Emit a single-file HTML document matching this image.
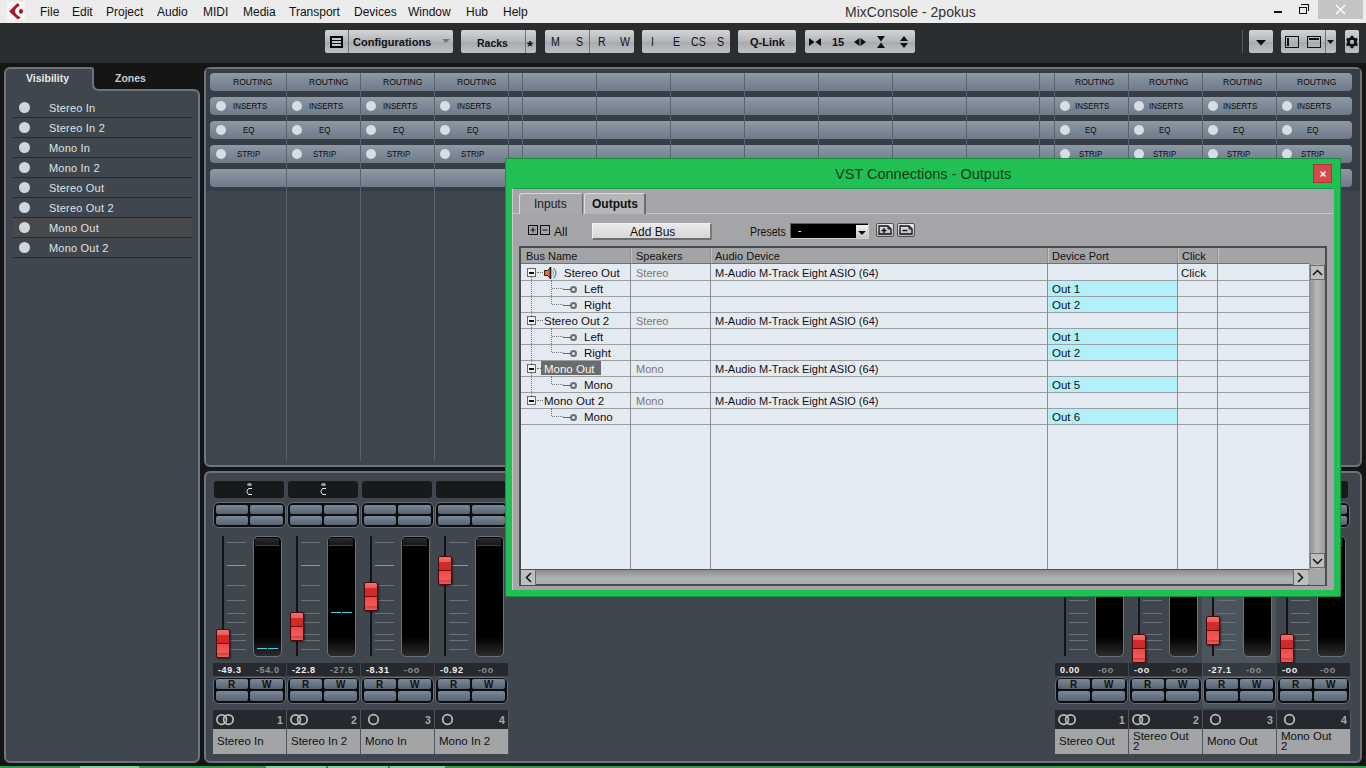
<!DOCTYPE html><html><head><meta charset="utf-8"><style>
*{margin:0;padding:0;box-sizing:border-box}
html,body{width:1366px;height:768px;overflow:hidden;background:#151516;font-family:"Liberation Sans", sans-serif;position:relative}
.a{position:absolute}
.t{position:absolute;white-space:nowrap;line-height:1}
</style></head><body>
<div class="a" style="left:0;top:0;width:1366px;height:23px;background:#ececec"></div>
<svg class="a" style="left:7px;top:2px" width="18" height="18" viewBox="0 0 18 18">
<rect x="0" y="0" width="18" height="18" fill="#f6f6f6"/>
<path d="M10.5 1 L12.9 3.4 Q2.6 9.4 13.8 15.4 L10.8 17.5 L2.1 9.4 Z" fill="#a8182c"/>
<ellipse cx="14" cy="9.4" rx="2" ry="2.4" fill="#a01828"/>
</svg>
<div class="t" style="left:40px;top:6px;font-size:12px;color:#111">File</div>
<div class="t" style="left:72px;top:6px;font-size:12px;color:#111">Edit</div>
<div class="t" style="left:106px;top:6px;font-size:12px;color:#111">Project</div>
<div class="t" style="left:157px;top:6px;font-size:12px;color:#111">Audio</div>
<div class="t" style="left:203px;top:6px;font-size:12px;color:#111">MIDI</div>
<div class="t" style="left:243px;top:6px;font-size:12px;color:#111">Media</div>
<div class="t" style="left:289px;top:6px;font-size:12px;color:#111">Transport</div>
<div class="t" style="left:354px;top:6px;font-size:12px;color:#111">Devices</div>
<div class="t" style="left:408px;top:6px;font-size:12px;color:#111">Window</div>
<div class="t" style="left:466px;top:6px;font-size:12px;color:#111">Hub</div>
<div class="t" style="left:503px;top:6px;font-size:12px;color:#111">Help</div>
<div class="t" style="left:845px;top:5px;font-size:14px;color:#333">MixConsole - 2pokus</div>
<div class="a" style="left:1274px;top:11px;width:8px;height:2px;background:#111"></div>
<div class="a" style="left:1299px;top:7px;width:8px;height:7px;border:1px solid #111"></div>
<div class="a" style="left:1301px;top:4px;width:8px;height:7px;border-top:1px solid #111;border-right:1px solid #111"></div>
<div class="a" style="left:1318px;top:0;width:45px;height:19px;background:#c4c4c4"></div>
<svg class="a" style="left:1335px;top:4px" width="11" height="11"><path d="M1 1L10 10M10 1L1 10" stroke="#fff" stroke-width="1.3"/></svg>
<div class="a" style="left:0;top:23px;width:1366px;height:40px;background:#2b2e31"></div>
<div class="a" style="left:325px;top:30px;width:128px;height:23px;background:linear-gradient(#d2d4d6,#b4b7ba 50%,#a6a9ad 52%,#bfc2c5);border-radius:2px;"></div>
<div class="a" style="left:348px;top:30px;width:1px;height:23px;background:#6e7175"></div>
<svg class="a" style="left:330px;top:36px" width="13" height="12"><rect x="0" y="0" width="13" height="12" fill="#050505"/><rect x="2" y="2" width="9" height="2" fill="#c4c6c8"/><rect x="2" y="5" width="9" height="2" fill="#c4c6c8"/><rect x="2" y="8" width="9" height="2" fill="#c4c6c8"/></svg>
<div class="t" style="left:353px;top:37px;font-size:11px;font-weight:bold;color:#111">Configurations</div>
<svg class="a" style="left:442px;top:39px" width="8" height="5"><path d="M0 0H8L4 4Z" fill="#777"/></svg>
<div class="a" style="left:461px;top:30px;width:75px;height:23px;background:linear-gradient(#d2d4d6,#b4b7ba 50%,#a6a9ad 52%,#bfc2c5);border-radius:2px;"></div>
<div class="a" style="left:525px;top:30px;width:1px;height:23px;background:#6e7175"></div>
<div class="t" style="left:477px;top:38px;font-size:10.5px;font-weight:bold;color:#111">Racks</div>
<div class="t" style="left:527px;top:38px;font-size:15px;font-weight:bold;color:#111">*</div>
<div class="a" style="left:545px;top:30px;width:89px;height:23px;background:linear-gradient(#d2d4d6,#b4b7ba 50%,#a6a9ad 52%,#bfc2c5);border-radius:2px;"></div>
<div class="a" style="left:589px;top:30px;width:1px;height:23px;background:#6e7175"></div>
<div class="t" style="left:550.5px;top:36px;font-size:12.5px;color:#111;transform:scaleX(0.85);transform-origin:0 0">M</div>
<div class="t" style="left:575.5px;top:36px;font-size:12.5px;color:#111;transform:scaleX(0.85);transform-origin:0 0">S</div>
<div class="t" style="left:597.5px;top:36px;font-size:12.5px;color:#111;transform:scaleX(0.85);transform-origin:0 0">R</div>
<div class="t" style="left:619.5px;top:36px;font-size:12.5px;color:#111;transform:scaleX(0.85);transform-origin:0 0">W</div>
<div class="a" style="left:642px;top:30px;width:88px;height:23px;background:linear-gradient(#d2d4d6,#b4b7ba 50%,#a6a9ad 52%,#bfc2c5);border-radius:2px;"></div>
<div class="t" style="left:651px;top:36px;font-size:12.5px;color:#111;transform:scaleX(0.85);transform-origin:0 0">I</div>
<div class="t" style="left:673px;top:36px;font-size:12.5px;color:#111;transform:scaleX(0.85);transform-origin:0 0">E</div>
<div class="t" style="left:690.5px;top:36px;font-size:12.5px;color:#111;transform:scaleX(0.85);transform-origin:0 0">CS</div>
<div class="t" style="left:716.5px;top:36px;font-size:12.5px;color:#111;transform:scaleX(0.85);transform-origin:0 0">S</div>
<div class="a" style="left:738px;top:30px;width:58px;height:23px;background:linear-gradient(#d2d4d6,#b4b7ba 50%,#a6a9ad 52%,#bfc2c5);border-radius:2px;"></div>
<div class="t" style="left:750px;top:37px;font-size:11px;font-weight:bold;color:#111">Q-Link</div>
<div class="a" style="left:805px;top:30px;width:110px;height:23px;background:linear-gradient(#d2d4d6,#b4b7ba 50%,#a6a9ad 52%,#bfc2c5);border-radius:2px;"></div>
<svg class="a" style="left:809px;top:38px" width="12" height="8"><path d="M0 0L5.5 4L0 8ZM12 0L6.5 4L12 8Z" fill="#111"/></svg>
<div class="t" style="left:832px;top:37px;font-size:11px;font-weight:bold;color:#111">15</div>
<svg class="a" style="left:854px;top:38px" width="12" height="8"><path d="M5.5 0L0 4L5.5 8ZM6.5 0L12 4L6.5 8Z" fill="#111"/></svg>
<svg class="a" style="left:877px;top:36px" width="8" height="12"><path d="M0 0H8L4 5.5ZM0 12H8L4 6.5Z" fill="#111"/></svg>
<svg class="a" style="left:900px;top:36px" width="8" height="12"><path d="M4 0L8 5H0ZM4 12L8 7H0Z" fill="#111"/></svg>
<div class="a" style="left:1242px;top:30px;width:1px;height:23px;background:#55585c"></div>
<div class="a" style="left:1249px;top:30px;width:24px;height:23px;background:linear-gradient(#d2d4d6,#b4b7ba 50%,#a6a9ad 52%,#bfc2c5);border-radius:2px;"></div>
<svg class="a" style="left:1256px;top:40px" width="10" height="6"><path d="M0 0H10L5 5.5Z" fill="#111"/></svg>
<div class="a" style="left:1281px;top:30px;width:55px;height:23px;background:linear-gradient(#d2d4d6,#b4b7ba 50%,#a6a9ad 52%,#bfc2c5);border-radius:2px;"></div>
<div class="a" style="left:1325px;top:30px;width:1px;height:23px;background:#6e7175"></div>
<div class="a" style="left:1285px;top:36px;width:14px;height:12px;border:1.5px solid #111"></div><div class="a" style="left:1287px;top:38px;width:2px;height:8px;background:#111"></div>
<div class="a" style="left:1307px;top:36px;width:14px;height:12px;border:1.5px solid #111"></div><div class="a" style="left:1309px;top:38px;width:10px;height:2px;background:#111"></div>
<svg class="a" style="left:1327px;top:40px" width="7" height="4"><path d="M0 0H7L3.5 4Z" fill="#111"/></svg>
<div class="a" style="left:1345px;top:30px;width:14px;height:23px;background:linear-gradient(#d2d4d6,#b4b7ba 50%,#a6a9ad 52%,#bfc2c5);border-radius:2px;"></div>
<svg class="a" style="left:1345px;top:35px" width="14" height="14" viewBox="0 0 14 14"><g transform="translate(7 7)">
<circle r="3.6" fill="none" stroke="#0a0a0a" stroke-width="2.6"/><rect x="-1.3" y="-6.2" width="2.6" height="3" fill="#0a0a0a" transform="rotate(0)"/><rect x="-1.3" y="-6.2" width="2.6" height="3" fill="#0a0a0a" transform="rotate(60)"/><rect x="-1.3" y="-6.2" width="2.6" height="3" fill="#0a0a0a" transform="rotate(120)"/><rect x="-1.3" y="-6.2" width="2.6" height="3" fill="#0a0a0a" transform="rotate(180)"/><rect x="-1.3" y="-6.2" width="2.6" height="3" fill="#0a0a0a" transform="rotate(240)"/><rect x="-1.3" y="-6.2" width="2.6" height="3" fill="#0a0a0a" transform="rotate(300)"/></g></svg>
<div class="a" style="left:4px;top:89px;width:196px;height:674px;background:#3f464e;border:2px solid #6c757e;border-radius:0 6px 6px 6px"></div>
<div class="a" style="left:4px;top:67px;width:90px;height:25px;background:#3f464e;border:2px solid #6c757e;border-bottom:none;border-radius:6px 3px 0 0"></div>
<div class="a" style="left:6px;top:89px;width:86px;height:3px;background:#3f464e"></div>
<svg class="a" style="left:90px;top:80px" width="14" height="14"><rect width="14" height="14" fill="#3f464e"/><path d="M3 0H14V10H8Q3 10 3 5Z" fill="#151516"/><path d="M3 0V4Q3 10 9 10H14" fill="none" stroke="#6c757e" stroke-width="2"/></svg>
<div class="t" style="left:26px;top:73px;font-size:10.5px;font-weight:bold;color:#e8ecef">Visibility</div>
<div class="t" style="left:115px;top:73px;font-size:10.5px;font-weight:bold;color:#c8ccd0">Zones</div>
<div class="a" style="left:19px;top:102px;width:11px;height:11px;border-radius:50%;background:#cfd6de"></div>
<div class="t" style="left:49px;top:103px;font-size:11px;letter-spacing:0.2px;color:#dfe3e7">Stereo In</div>
<div class="a" style="left:13px;top:117px;width:179px;height:1px;background:#252a2f"></div>
<div class="a" style="left:19px;top:122px;width:11px;height:11px;border-radius:50%;background:#cfd6de"></div>
<div class="t" style="left:49px;top:123px;font-size:11px;letter-spacing:0.2px;color:#dfe3e7">Stereo In 2</div>
<div class="a" style="left:13px;top:137px;width:179px;height:1px;background:#252a2f"></div>
<div class="a" style="left:19px;top:142px;width:11px;height:11px;border-radius:50%;background:#cfd6de"></div>
<div class="t" style="left:49px;top:143px;font-size:11px;letter-spacing:0.2px;color:#dfe3e7">Mono In</div>
<div class="a" style="left:13px;top:157px;width:179px;height:1px;background:#252a2f"></div>
<div class="a" style="left:19px;top:162px;width:11px;height:11px;border-radius:50%;background:#cfd6de"></div>
<div class="t" style="left:49px;top:163px;font-size:11px;letter-spacing:0.2px;color:#dfe3e7">Mono In 2</div>
<div class="a" style="left:13px;top:177px;width:179px;height:1px;background:#252a2f"></div>
<div class="a" style="left:19px;top:182px;width:11px;height:11px;border-radius:50%;background:#cfd6de"></div>
<div class="t" style="left:49px;top:183px;font-size:11px;letter-spacing:0.2px;color:#dfe3e7">Stereo Out</div>
<div class="a" style="left:13px;top:197px;width:179px;height:1px;background:#252a2f"></div>
<div class="a" style="left:19px;top:202px;width:11px;height:11px;border-radius:50%;background:#cfd6de"></div>
<div class="t" style="left:49px;top:203px;font-size:11px;letter-spacing:0.2px;color:#dfe3e7">Stereo Out 2</div>
<div class="a" style="left:13px;top:217px;width:179px;height:1px;background:#252a2f"></div>
<div class="a" style="left:13px;top:218px;width:179px;height:19px;background:#48494b"></div>
<div class="a" style="left:19px;top:222px;width:11px;height:11px;border-radius:50%;background:#cfd6de"></div>
<div class="t" style="left:49px;top:223px;font-size:11px;letter-spacing:0.2px;color:#dfe3e7">Mono Out</div>
<div class="a" style="left:13px;top:237px;width:179px;height:1px;background:#252a2f"></div>
<div class="a" style="left:19px;top:242px;width:11px;height:11px;border-radius:50%;background:#cfd6de"></div>
<div class="t" style="left:49px;top:243px;font-size:11px;letter-spacing:0.2px;color:#dfe3e7">Mono Out 2</div>
<div class="a" style="left:13px;top:257px;width:179px;height:1px;background:#252a2f"></div>
<div class="a" style="left:204px;top:67px;width:1158px;height:400px;background:#3e454d;border:2px solid #6c757e;border-radius:6px"></div>
<div class="a" style="left:206px;top:69px;width:1154px;height:122px;background:#363d44"></div>
<div class="a" style="left:210px;top:73px;width:1142px;height:18px;background:linear-gradient(#8d99a5,#7a8693 60%,#6e7a87);border-radius:4px"></div>
<div class="a" style="left:210px;top:97px;width:1142px;height:18px;background:linear-gradient(#8d99a5,#7a8693 60%,#6e7a87);border-radius:4px"></div>
<div class="a" style="left:210px;top:121px;width:1142px;height:18px;background:linear-gradient(#8d99a5,#7a8693 60%,#6e7a87);border-radius:4px"></div>
<div class="a" style="left:210px;top:145px;width:1142px;height:18px;background:linear-gradient(#8d99a5,#7a8693 60%,#6e7a87);border-radius:4px"></div>
<div class="a" style="left:210px;top:169px;width:1142px;height:18px;background:linear-gradient(#8d99a5,#7a8693 60%,#6e7a87);border-radius:4px"></div>
<div class="a" style="left:286px;top:73px;width:1px;height:388px;background:#5a636c"></div>
<div class="a" style="left:360px;top:73px;width:1px;height:388px;background:#5a636c"></div>
<div class="a" style="left:434px;top:73px;width:1px;height:388px;background:#5a636c"></div>
<div class="a" style="left:508px;top:73px;width:1px;height:388px;background:#5a636c"></div>
<div class="a" style="left:522px;top:73px;width:1px;height:388px;background:#5a636c"></div>
<div class="a" style="left:596px;top:73px;width:1px;height:388px;background:#5a636c"></div>
<div class="a" style="left:670px;top:73px;width:1px;height:388px;background:#5a636c"></div>
<div class="a" style="left:744px;top:73px;width:1px;height:388px;background:#5a636c"></div>
<div class="a" style="left:818px;top:73px;width:1px;height:388px;background:#5a636c"></div>
<div class="a" style="left:892px;top:73px;width:1px;height:388px;background:#5a636c"></div>
<div class="a" style="left:966px;top:73px;width:1px;height:388px;background:#5a636c"></div>
<div class="a" style="left:1039px;top:73px;width:1px;height:388px;background:#5a636c"></div>
<div class="a" style="left:1054px;top:73px;width:1px;height:388px;background:#5a636c"></div>
<div class="a" style="left:1128px;top:73px;width:1px;height:388px;background:#5a636c"></div>
<div class="a" style="left:1202px;top:73px;width:1px;height:388px;background:#5a636c"></div>
<div class="a" style="left:1276px;top:73px;width:1px;height:388px;background:#5a636c"></div>
<div class="t" style="left:233px;top:78px;font-size:9px;color:#0a0a0a;transform:scaleX(0.95);transform-origin:0 0">ROUTING</div>
<div class="a" style="left:216px;top:101px;width:10px;height:10px;border-radius:50%;background:#d6dde4"></div>
<div class="t" style="left:233px;top:102px;font-size:9px;color:#0a0a0a;transform:scaleX(0.88);transform-origin:0 0">INSERTS</div>
<div class="a" style="left:216px;top:125px;width:10px;height:10px;border-radius:50%;background:#d6dde4"></div>
<div class="t" style="left:243px;top:126px;font-size:9px;color:#0a0a0a;transform:scaleX(0.88);transform-origin:0 0">EQ</div>
<div class="a" style="left:216px;top:149px;width:10px;height:10px;border-radius:50%;background:#d6dde4"></div>
<div class="t" style="left:237px;top:150px;font-size:9px;color:#0a0a0a;transform:scaleX(0.88);transform-origin:0 0">STRIP</div>
<div class="t" style="left:309px;top:78px;font-size:9px;color:#0a0a0a;transform:scaleX(0.95);transform-origin:0 0">ROUTING</div>
<div class="a" style="left:292px;top:101px;width:10px;height:10px;border-radius:50%;background:#d6dde4"></div>
<div class="t" style="left:309px;top:102px;font-size:9px;color:#0a0a0a;transform:scaleX(0.88);transform-origin:0 0">INSERTS</div>
<div class="a" style="left:292px;top:125px;width:10px;height:10px;border-radius:50%;background:#d6dde4"></div>
<div class="t" style="left:319px;top:126px;font-size:9px;color:#0a0a0a;transform:scaleX(0.88);transform-origin:0 0">EQ</div>
<div class="a" style="left:292px;top:149px;width:10px;height:10px;border-radius:50%;background:#d6dde4"></div>
<div class="t" style="left:313px;top:150px;font-size:9px;color:#0a0a0a;transform:scaleX(0.88);transform-origin:0 0">STRIP</div>
<div class="t" style="left:383px;top:78px;font-size:9px;color:#0a0a0a;transform:scaleX(0.95);transform-origin:0 0">ROUTING</div>
<div class="a" style="left:366px;top:101px;width:10px;height:10px;border-radius:50%;background:#d6dde4"></div>
<div class="t" style="left:383px;top:102px;font-size:9px;color:#0a0a0a;transform:scaleX(0.88);transform-origin:0 0">INSERTS</div>
<div class="a" style="left:366px;top:125px;width:10px;height:10px;border-radius:50%;background:#d6dde4"></div>
<div class="t" style="left:393px;top:126px;font-size:9px;color:#0a0a0a;transform:scaleX(0.88);transform-origin:0 0">EQ</div>
<div class="a" style="left:366px;top:149px;width:10px;height:10px;border-radius:50%;background:#d6dde4"></div>
<div class="t" style="left:387px;top:150px;font-size:9px;color:#0a0a0a;transform:scaleX(0.88);transform-origin:0 0">STRIP</div>
<div class="t" style="left:457px;top:78px;font-size:9px;color:#0a0a0a;transform:scaleX(0.95);transform-origin:0 0">ROUTING</div>
<div class="a" style="left:440px;top:101px;width:10px;height:10px;border-radius:50%;background:#d6dde4"></div>
<div class="t" style="left:457px;top:102px;font-size:9px;color:#0a0a0a;transform:scaleX(0.88);transform-origin:0 0">INSERTS</div>
<div class="a" style="left:440px;top:125px;width:10px;height:10px;border-radius:50%;background:#d6dde4"></div>
<div class="t" style="left:467px;top:126px;font-size:9px;color:#0a0a0a;transform:scaleX(0.88);transform-origin:0 0">EQ</div>
<div class="a" style="left:440px;top:149px;width:10px;height:10px;border-radius:50%;background:#d6dde4"></div>
<div class="t" style="left:461px;top:150px;font-size:9px;color:#0a0a0a;transform:scaleX(0.88);transform-origin:0 0">STRIP</div>
<div class="t" style="left:1075px;top:78px;font-size:9px;color:#0a0a0a;transform:scaleX(0.95);transform-origin:0 0">ROUTING</div>
<div class="a" style="left:1060px;top:101px;width:10px;height:10px;border-radius:50%;background:#d6dde4"></div>
<div class="t" style="left:1075px;top:102px;font-size:9px;color:#0a0a0a;transform:scaleX(0.88);transform-origin:0 0">INSERTS</div>
<div class="a" style="left:1060px;top:125px;width:10px;height:10px;border-radius:50%;background:#d6dde4"></div>
<div class="t" style="left:1085px;top:126px;font-size:9px;color:#0a0a0a;transform:scaleX(0.88);transform-origin:0 0">EQ</div>
<div class="a" style="left:1060px;top:149px;width:10px;height:10px;border-radius:50%;background:#d6dde4"></div>
<div class="t" style="left:1079px;top:150px;font-size:9px;color:#0a0a0a;transform:scaleX(0.88);transform-origin:0 0">STRIP</div>
<div class="t" style="left:1149px;top:78px;font-size:9px;color:#0a0a0a;transform:scaleX(0.95);transform-origin:0 0">ROUTING</div>
<div class="a" style="left:1134px;top:101px;width:10px;height:10px;border-radius:50%;background:#d6dde4"></div>
<div class="t" style="left:1149px;top:102px;font-size:9px;color:#0a0a0a;transform:scaleX(0.88);transform-origin:0 0">INSERTS</div>
<div class="a" style="left:1134px;top:125px;width:10px;height:10px;border-radius:50%;background:#d6dde4"></div>
<div class="t" style="left:1159px;top:126px;font-size:9px;color:#0a0a0a;transform:scaleX(0.88);transform-origin:0 0">EQ</div>
<div class="a" style="left:1134px;top:149px;width:10px;height:10px;border-radius:50%;background:#d6dde4"></div>
<div class="t" style="left:1153px;top:150px;font-size:9px;color:#0a0a0a;transform:scaleX(0.88);transform-origin:0 0">STRIP</div>
<div class="t" style="left:1223px;top:78px;font-size:9px;color:#0a0a0a;transform:scaleX(0.95);transform-origin:0 0">ROUTING</div>
<div class="a" style="left:1208px;top:101px;width:10px;height:10px;border-radius:50%;background:#d6dde4"></div>
<div class="t" style="left:1223px;top:102px;font-size:9px;color:#0a0a0a;transform:scaleX(0.88);transform-origin:0 0">INSERTS</div>
<div class="a" style="left:1208px;top:125px;width:10px;height:10px;border-radius:50%;background:#d6dde4"></div>
<div class="t" style="left:1233px;top:126px;font-size:9px;color:#0a0a0a;transform:scaleX(0.88);transform-origin:0 0">EQ</div>
<div class="a" style="left:1208px;top:149px;width:10px;height:10px;border-radius:50%;background:#d6dde4"></div>
<div class="t" style="left:1227px;top:150px;font-size:9px;color:#0a0a0a;transform:scaleX(0.88);transform-origin:0 0">STRIP</div>
<div class="t" style="left:1297px;top:78px;font-size:9px;color:#0a0a0a;transform:scaleX(0.95);transform-origin:0 0">ROUTING</div>
<div class="a" style="left:1282px;top:101px;width:10px;height:10px;border-radius:50%;background:#d6dde4"></div>
<div class="t" style="left:1297px;top:102px;font-size:9px;color:#0a0a0a;transform:scaleX(0.88);transform-origin:0 0">INSERTS</div>
<div class="a" style="left:1282px;top:125px;width:10px;height:10px;border-radius:50%;background:#d6dde4"></div>
<div class="t" style="left:1307px;top:126px;font-size:9px;color:#0a0a0a;transform:scaleX(0.88);transform-origin:0 0">EQ</div>
<div class="a" style="left:1282px;top:149px;width:10px;height:10px;border-radius:50%;background:#d6dde4"></div>
<div class="t" style="left:1301px;top:150px;font-size:9px;color:#0a0a0a;transform:scaleX(0.88);transform-origin:0 0">STRIP</div>
<div class="a" style="left:204px;top:471px;width:1158px;height:292px;background:#3f464e;border:2px solid #6c757e;border-radius:6px"></div>
<div class="a" style="left:214px;top:481px;width:70px;height:17px;background:#17191b;border-radius:3px"></div>
<div class="a" style="left:247px;top:483px;width:5px;height:3px;border-radius:50%;background:#9aa2a9"></div>
<svg class="a" style="left:246px;top:488px" width="7" height="8"><path d="M6 0.5H2.5L0.8 3.5L2.5 6.5H6" fill="none" stroke="#eee" stroke-width="1"/></svg>
<div class="a" style="left:213px;top:502px;width:73px;height:26px;background:#0b0d0f;border:1px solid #666e76;border-radius:6px"></div>
<div class="a" style="left:216px;top:505px;width:32px;height:9px;background:linear-gradient(#7b8999,#56636f);border-radius:2px"></div>
<div class="a" style="left:216px;top:516px;width:32px;height:9px;background:linear-gradient(#7b8999,#56636f);border-radius:2px"></div>
<div class="a" style="left:250px;top:505px;width:33px;height:9px;background:linear-gradient(#7b8999,#56636f);border-radius:2px"></div>
<div class="a" style="left:250px;top:516px;width:33px;height:9px;background:linear-gradient(#7b8999,#56636f);border-radius:2px"></div>
<div class="a" style="left:222px;top:536px;width:2px;height:120px;background:#121416"></div>
<div class="a" style="left:227px;top:542px;width:19px;height:1px;background:#6a727a"></div>
<div class="a" style="left:227px;top:565px;width:19px;height:1px;background:#8f979f"></div>
<div class="a" style="left:227px;top:585px;width:19px;height:1px;background:#6a727a"></div>
<div class="a" style="left:227px;top:600px;width:19px;height:1px;background:#6a727a"></div>
<div class="a" style="left:227px;top:613px;width:19px;height:1px;background:#6a727a"></div>
<div class="a" style="left:227px;top:622px;width:19px;height:1px;background:#6a727a"></div>
<div class="a" style="left:227px;top:634px;width:19px;height:1px;background:#6a727a"></div>
<div class="a" style="left:227px;top:640px;width:19px;height:1px;background:#6a727a"></div>
<div class="a" style="left:227px;top:649px;width:19px;height:1px;background:#6a727a"></div>
<div class="a" style="left:253px;top:536px;width:29px;height:121px;background:linear-gradient(#000 84%,#2c2c2e);border:1px solid #6a7077;border-radius:5px"></div>
<div class="a" style="left:255px;top:538px;width:24px;height:7px;background:linear-gradient(#2a2c2e,#151617)"></div>
<div class="a" style="left:255px;top:545px;width:24px;height:1px;background:#3f4347"></div>
<div class="a" style="left:257px;top:648px;width:10px;height:1px;background:#4ecde0"></div>
<div class="a" style="left:268px;top:648px;width:10px;height:1px;background:#4ecde0"></div>
<div class="a" style="left:216px;top:629px;width:14px;height:29px;background:linear-gradient(#f07070,#e85c5c 18%,#d42a2a 19%,#d02828 46%,#d02828 48%,#6a1010 48%,#6a1010 52%,#f04848 52%,#f05a5a 84%,#d23c3c 85%,#e86262);border:1px solid #4a0808;border-radius:2px;box-shadow:1px 1px 2px rgba(0,0,0,.5)"></div>
<div class="a" style="left:213px;top:663px;width:73px;height:13px;background:#262a2e"></div>
<div class="t" style="left:218px;top:666px;font-size:9px;font-weight:bold;letter-spacing:0.6px;color:#f0f0f0">-49.3</div>
<div class="t" style="left:256px;top:666px;font-size:9px;font-weight:bold;letter-spacing:0.6px;color:#8a8f94">-54.0</div>
<div class="a" style="left:213px;top:677px;width:73px;height:27px;background:#0b0d0f;border:1px solid #666e76;border-radius:6px"></div>
<div class="a" style="left:216px;top:679px;width:32px;height:10px;background:linear-gradient(#7b8999,#56636f);border-radius:2px"></div>
<div class="a" style="left:216px;top:691px;width:32px;height:10px;background:linear-gradient(#7b8999,#56636f);border-radius:2px"></div>
<div class="a" style="left:250px;top:679px;width:33px;height:10px;background:linear-gradient(#7b8999,#56636f);border-radius:2px"></div>
<div class="a" style="left:250px;top:691px;width:33px;height:10px;background:linear-gradient(#7b8999,#56636f);border-radius:2px"></div>
<div class="t" style="left:228px;top:680px;font-size:10px;font-weight:bold;color:#111">R</div>
<div class="t" style="left:262px;top:680px;font-size:10px;font-weight:bold;color:#111">W</div>
<div class="a" style="left:213px;top:710px;width:73px;height:19px;background:#25292d"></div>
<div class="a" style="left:213px;top:729px;width:73px;height:25px;background:#a2a4a6"></div>
<div class="a" style="left:286px;top:710px;width:1px;height:44px;background:#50565c"></div>
<svg class="a" style="left:215px;top:713px" width="20" height="13"><circle cx="6.7" cy="6.6" r="4.8" fill="none" stroke="#bdbdbd" stroke-width="1.7"/><circle cx="13.4" cy="6.6" r="4.8" fill="none" stroke="#bdbdbd" stroke-width="1.7"/></svg>
<div class="t" style="left:277px;top:715px;font-size:10.5px;font-weight:bold;color:#aaa">1</div>
<div class="t" style="left:217px;top:736px;font-size:11.5px;color:#111">Stereo In</div>
<div class="a" style="left:288px;top:481px;width:70px;height:17px;background:#17191b;border-radius:3px"></div>
<div class="a" style="left:321px;top:483px;width:5px;height:3px;border-radius:50%;background:#9aa2a9"></div>
<svg class="a" style="left:320px;top:488px" width="7" height="8"><path d="M6 0.5H2.5L0.8 3.5L2.5 6.5H6" fill="none" stroke="#eee" stroke-width="1"/></svg>
<div class="a" style="left:287px;top:502px;width:73px;height:26px;background:#0b0d0f;border:1px solid #666e76;border-radius:6px"></div>
<div class="a" style="left:290px;top:505px;width:32px;height:9px;background:linear-gradient(#7b8999,#56636f);border-radius:2px"></div>
<div class="a" style="left:290px;top:516px;width:32px;height:9px;background:linear-gradient(#7b8999,#56636f);border-radius:2px"></div>
<div class="a" style="left:324px;top:505px;width:33px;height:9px;background:linear-gradient(#7b8999,#56636f);border-radius:2px"></div>
<div class="a" style="left:324px;top:516px;width:33px;height:9px;background:linear-gradient(#7b8999,#56636f);border-radius:2px"></div>
<div class="a" style="left:296px;top:536px;width:2px;height:120px;background:#121416"></div>
<div class="a" style="left:301px;top:542px;width:19px;height:1px;background:#6a727a"></div>
<div class="a" style="left:301px;top:565px;width:19px;height:1px;background:#8f979f"></div>
<div class="a" style="left:301px;top:585px;width:19px;height:1px;background:#6a727a"></div>
<div class="a" style="left:301px;top:600px;width:19px;height:1px;background:#6a727a"></div>
<div class="a" style="left:301px;top:613px;width:19px;height:1px;background:#6a727a"></div>
<div class="a" style="left:301px;top:622px;width:19px;height:1px;background:#6a727a"></div>
<div class="a" style="left:301px;top:634px;width:19px;height:1px;background:#6a727a"></div>
<div class="a" style="left:301px;top:640px;width:19px;height:1px;background:#6a727a"></div>
<div class="a" style="left:301px;top:649px;width:19px;height:1px;background:#6a727a"></div>
<div class="a" style="left:327px;top:536px;width:29px;height:121px;background:linear-gradient(#000 84%,#2c2c2e);border:1px solid #6a7077;border-radius:5px"></div>
<div class="a" style="left:329px;top:538px;width:24px;height:7px;background:linear-gradient(#2a2c2e,#151617)"></div>
<div class="a" style="left:329px;top:545px;width:24px;height:1px;background:#3f4347"></div>
<div class="a" style="left:331px;top:612px;width:10px;height:1px;background:#4ecde0"></div>
<div class="a" style="left:342px;top:612px;width:10px;height:1px;background:#4ecde0"></div>
<div class="a" style="left:290px;top:612px;width:14px;height:29px;background:linear-gradient(#f07070,#e85c5c 18%,#d42a2a 19%,#d02828 46%,#d02828 48%,#6a1010 48%,#6a1010 52%,#f04848 52%,#f05a5a 84%,#d23c3c 85%,#e86262);border:1px solid #4a0808;border-radius:2px;box-shadow:1px 1px 2px rgba(0,0,0,.5)"></div>
<div class="a" style="left:287px;top:663px;width:73px;height:13px;background:#262a2e"></div>
<div class="t" style="left:292px;top:666px;font-size:9px;font-weight:bold;letter-spacing:0.6px;color:#f0f0f0">-22.8</div>
<div class="t" style="left:330px;top:666px;font-size:9px;font-weight:bold;letter-spacing:0.6px;color:#8a8f94">-27.5</div>
<div class="a" style="left:287px;top:677px;width:73px;height:27px;background:#0b0d0f;border:1px solid #666e76;border-radius:6px"></div>
<div class="a" style="left:290px;top:679px;width:32px;height:10px;background:linear-gradient(#7b8999,#56636f);border-radius:2px"></div>
<div class="a" style="left:290px;top:691px;width:32px;height:10px;background:linear-gradient(#7b8999,#56636f);border-radius:2px"></div>
<div class="a" style="left:324px;top:679px;width:33px;height:10px;background:linear-gradient(#7b8999,#56636f);border-radius:2px"></div>
<div class="a" style="left:324px;top:691px;width:33px;height:10px;background:linear-gradient(#7b8999,#56636f);border-radius:2px"></div>
<div class="t" style="left:302px;top:680px;font-size:10px;font-weight:bold;color:#111">R</div>
<div class="t" style="left:336px;top:680px;font-size:10px;font-weight:bold;color:#111">W</div>
<div class="a" style="left:287px;top:710px;width:73px;height:19px;background:#25292d"></div>
<div class="a" style="left:287px;top:729px;width:73px;height:25px;background:#a2a4a6"></div>
<div class="a" style="left:360px;top:710px;width:1px;height:44px;background:#50565c"></div>
<svg class="a" style="left:289px;top:713px" width="20" height="13"><circle cx="6.7" cy="6.6" r="4.8" fill="none" stroke="#bdbdbd" stroke-width="1.7"/><circle cx="13.4" cy="6.6" r="4.8" fill="none" stroke="#bdbdbd" stroke-width="1.7"/></svg>
<div class="t" style="left:351px;top:715px;font-size:10.5px;font-weight:bold;color:#aaa">2</div>
<div class="t" style="left:291px;top:736px;font-size:11.5px;color:#111">Stereo In 2</div>
<div class="a" style="left:362px;top:481px;width:70px;height:17px;background:#17191b;border-radius:3px"></div>
<div class="a" style="left:361px;top:502px;width:73px;height:26px;background:#0b0d0f;border:1px solid #666e76;border-radius:6px"></div>
<div class="a" style="left:364px;top:505px;width:32px;height:9px;background:linear-gradient(#7b8999,#56636f);border-radius:2px"></div>
<div class="a" style="left:364px;top:516px;width:32px;height:9px;background:linear-gradient(#7b8999,#56636f);border-radius:2px"></div>
<div class="a" style="left:398px;top:505px;width:33px;height:9px;background:linear-gradient(#7b8999,#56636f);border-radius:2px"></div>
<div class="a" style="left:398px;top:516px;width:33px;height:9px;background:linear-gradient(#7b8999,#56636f);border-radius:2px"></div>
<div class="a" style="left:370px;top:536px;width:2px;height:120px;background:#121416"></div>
<div class="a" style="left:375px;top:542px;width:19px;height:1px;background:#6a727a"></div>
<div class="a" style="left:375px;top:565px;width:19px;height:1px;background:#8f979f"></div>
<div class="a" style="left:375px;top:585px;width:19px;height:1px;background:#6a727a"></div>
<div class="a" style="left:375px;top:600px;width:19px;height:1px;background:#6a727a"></div>
<div class="a" style="left:375px;top:613px;width:19px;height:1px;background:#6a727a"></div>
<div class="a" style="left:375px;top:622px;width:19px;height:1px;background:#6a727a"></div>
<div class="a" style="left:375px;top:634px;width:19px;height:1px;background:#6a727a"></div>
<div class="a" style="left:375px;top:640px;width:19px;height:1px;background:#6a727a"></div>
<div class="a" style="left:375px;top:649px;width:19px;height:1px;background:#6a727a"></div>
<div class="a" style="left:401px;top:536px;width:29px;height:121px;background:linear-gradient(#000 84%,#2c2c2e);border:1px solid #6a7077;border-radius:5px"></div>
<div class="a" style="left:403px;top:538px;width:24px;height:7px;background:linear-gradient(#2a2c2e,#151617)"></div>
<div class="a" style="left:403px;top:545px;width:24px;height:1px;background:#3f4347"></div>
<div class="a" style="left:364px;top:582px;width:14px;height:29px;background:linear-gradient(#f07070,#e85c5c 18%,#d42a2a 19%,#d02828 46%,#d02828 48%,#6a1010 48%,#6a1010 52%,#f04848 52%,#f05a5a 84%,#d23c3c 85%,#e86262);border:1px solid #4a0808;border-radius:2px;box-shadow:1px 1px 2px rgba(0,0,0,.5)"></div>
<div class="a" style="left:361px;top:663px;width:73px;height:13px;background:#262a2e"></div>
<div class="t" style="left:366px;top:666px;font-size:9px;font-weight:bold;letter-spacing:0.6px;color:#f0f0f0">-8.31</div>
<div class="t" style="left:404px;top:666px;font-size:9px;font-weight:bold;letter-spacing:0.6px;color:#8a8f94">-oo</div>
<div class="a" style="left:361px;top:677px;width:73px;height:27px;background:#0b0d0f;border:1px solid #666e76;border-radius:6px"></div>
<div class="a" style="left:364px;top:679px;width:32px;height:10px;background:linear-gradient(#7b8999,#56636f);border-radius:2px"></div>
<div class="a" style="left:364px;top:691px;width:32px;height:10px;background:linear-gradient(#7b8999,#56636f);border-radius:2px"></div>
<div class="a" style="left:398px;top:679px;width:33px;height:10px;background:linear-gradient(#7b8999,#56636f);border-radius:2px"></div>
<div class="a" style="left:398px;top:691px;width:33px;height:10px;background:linear-gradient(#7b8999,#56636f);border-radius:2px"></div>
<div class="t" style="left:376px;top:680px;font-size:10px;font-weight:bold;color:#111">R</div>
<div class="t" style="left:410px;top:680px;font-size:10px;font-weight:bold;color:#111">W</div>
<div class="a" style="left:361px;top:710px;width:73px;height:19px;background:#25292d"></div>
<div class="a" style="left:361px;top:729px;width:73px;height:25px;background:#a2a4a6"></div>
<div class="a" style="left:434px;top:710px;width:1px;height:44px;background:#50565c"></div>
<svg class="a" style="left:367px;top:713px" width="14" height="13"><circle cx="6.5" cy="6.5" r="4.8" fill="none" stroke="#bdbdbd" stroke-width="1.7"/></svg>
<div class="t" style="left:425px;top:715px;font-size:10.5px;font-weight:bold;color:#aaa">3</div>
<div class="t" style="left:365px;top:736px;font-size:11.5px;color:#111">Mono In</div>
<div class="a" style="left:436px;top:481px;width:70px;height:17px;background:#17191b;border-radius:3px"></div>
<div class="a" style="left:435px;top:502px;width:73px;height:26px;background:#0b0d0f;border:1px solid #666e76;border-radius:6px"></div>
<div class="a" style="left:438px;top:505px;width:32px;height:9px;background:linear-gradient(#7b8999,#56636f);border-radius:2px"></div>
<div class="a" style="left:438px;top:516px;width:32px;height:9px;background:linear-gradient(#7b8999,#56636f);border-radius:2px"></div>
<div class="a" style="left:472px;top:505px;width:33px;height:9px;background:linear-gradient(#7b8999,#56636f);border-radius:2px"></div>
<div class="a" style="left:472px;top:516px;width:33px;height:9px;background:linear-gradient(#7b8999,#56636f);border-radius:2px"></div>
<div class="a" style="left:444px;top:536px;width:2px;height:120px;background:#121416"></div>
<div class="a" style="left:449px;top:542px;width:19px;height:1px;background:#6a727a"></div>
<div class="a" style="left:449px;top:565px;width:19px;height:1px;background:#8f979f"></div>
<div class="a" style="left:449px;top:585px;width:19px;height:1px;background:#6a727a"></div>
<div class="a" style="left:449px;top:600px;width:19px;height:1px;background:#6a727a"></div>
<div class="a" style="left:449px;top:613px;width:19px;height:1px;background:#6a727a"></div>
<div class="a" style="left:449px;top:622px;width:19px;height:1px;background:#6a727a"></div>
<div class="a" style="left:449px;top:634px;width:19px;height:1px;background:#6a727a"></div>
<div class="a" style="left:449px;top:640px;width:19px;height:1px;background:#6a727a"></div>
<div class="a" style="left:449px;top:649px;width:19px;height:1px;background:#6a727a"></div>
<div class="a" style="left:475px;top:536px;width:29px;height:121px;background:linear-gradient(#000 84%,#2c2c2e);border:1px solid #6a7077;border-radius:5px"></div>
<div class="a" style="left:477px;top:538px;width:24px;height:7px;background:linear-gradient(#2a2c2e,#151617)"></div>
<div class="a" style="left:477px;top:545px;width:24px;height:1px;background:#3f4347"></div>
<div class="a" style="left:438px;top:556px;width:14px;height:29px;background:linear-gradient(#f07070,#e85c5c 18%,#d42a2a 19%,#d02828 46%,#d02828 48%,#6a1010 48%,#6a1010 52%,#f04848 52%,#f05a5a 84%,#d23c3c 85%,#e86262);border:1px solid #4a0808;border-radius:2px;box-shadow:1px 1px 2px rgba(0,0,0,.5)"></div>
<div class="a" style="left:435px;top:663px;width:73px;height:13px;background:#262a2e"></div>
<div class="t" style="left:440px;top:666px;font-size:9px;font-weight:bold;letter-spacing:0.6px;color:#f0f0f0">-0.92</div>
<div class="t" style="left:478px;top:666px;font-size:9px;font-weight:bold;letter-spacing:0.6px;color:#8a8f94">-oo</div>
<div class="a" style="left:435px;top:677px;width:73px;height:27px;background:#0b0d0f;border:1px solid #666e76;border-radius:6px"></div>
<div class="a" style="left:438px;top:679px;width:32px;height:10px;background:linear-gradient(#7b8999,#56636f);border-radius:2px"></div>
<div class="a" style="left:438px;top:691px;width:32px;height:10px;background:linear-gradient(#7b8999,#56636f);border-radius:2px"></div>
<div class="a" style="left:472px;top:679px;width:33px;height:10px;background:linear-gradient(#7b8999,#56636f);border-radius:2px"></div>
<div class="a" style="left:472px;top:691px;width:33px;height:10px;background:linear-gradient(#7b8999,#56636f);border-radius:2px"></div>
<div class="t" style="left:450px;top:680px;font-size:10px;font-weight:bold;color:#111">R</div>
<div class="t" style="left:484px;top:680px;font-size:10px;font-weight:bold;color:#111">W</div>
<div class="a" style="left:435px;top:710px;width:73px;height:19px;background:#25292d"></div>
<div class="a" style="left:435px;top:729px;width:73px;height:25px;background:#a2a4a6"></div>
<div class="a" style="left:508px;top:710px;width:1px;height:44px;background:#50565c"></div>
<svg class="a" style="left:441px;top:713px" width="14" height="13"><circle cx="6.5" cy="6.5" r="4.8" fill="none" stroke="#bdbdbd" stroke-width="1.7"/></svg>
<div class="t" style="left:499px;top:715px;font-size:10.5px;font-weight:bold;color:#aaa">4</div>
<div class="t" style="left:439px;top:736px;font-size:11.5px;color:#111">Mono In 2</div>
<div class="a" style="left:1056px;top:481px;width:70px;height:17px;background:#17191b;border-radius:3px"></div>
<div class="a" style="left:1055px;top:502px;width:73px;height:26px;background:#0b0d0f;border:1px solid #666e76;border-radius:6px"></div>
<div class="a" style="left:1058px;top:505px;width:32px;height:9px;background:linear-gradient(#7b8999,#56636f);border-radius:2px"></div>
<div class="a" style="left:1058px;top:516px;width:32px;height:9px;background:linear-gradient(#7b8999,#56636f);border-radius:2px"></div>
<div class="a" style="left:1092px;top:505px;width:33px;height:9px;background:linear-gradient(#7b8999,#56636f);border-radius:2px"></div>
<div class="a" style="left:1092px;top:516px;width:33px;height:9px;background:linear-gradient(#7b8999,#56636f);border-radius:2px"></div>
<div class="a" style="left:1064px;top:536px;width:2px;height:120px;background:#121416"></div>
<div class="a" style="left:1069px;top:542px;width:19px;height:1px;background:#6a727a"></div>
<div class="a" style="left:1069px;top:565px;width:19px;height:1px;background:#8f979f"></div>
<div class="a" style="left:1069px;top:585px;width:19px;height:1px;background:#6a727a"></div>
<div class="a" style="left:1069px;top:600px;width:19px;height:1px;background:#6a727a"></div>
<div class="a" style="left:1069px;top:613px;width:19px;height:1px;background:#6a727a"></div>
<div class="a" style="left:1069px;top:622px;width:19px;height:1px;background:#6a727a"></div>
<div class="a" style="left:1069px;top:634px;width:19px;height:1px;background:#6a727a"></div>
<div class="a" style="left:1069px;top:640px;width:19px;height:1px;background:#6a727a"></div>
<div class="a" style="left:1069px;top:649px;width:19px;height:1px;background:#6a727a"></div>
<div class="a" style="left:1095px;top:536px;width:29px;height:121px;background:linear-gradient(#000 84%,#2c2c2e);border:1px solid #6a7077;border-radius:5px"></div>
<div class="a" style="left:1097px;top:538px;width:24px;height:7px;background:linear-gradient(#2a2c2e,#151617)"></div>
<div class="a" style="left:1097px;top:545px;width:24px;height:1px;background:#3f4347"></div>
<div class="a" style="left:1055px;top:663px;width:73px;height:13px;background:#262a2e"></div>
<div class="t" style="left:1060px;top:666px;font-size:9px;font-weight:bold;letter-spacing:0.6px;color:#f0f0f0">0.00</div>
<div class="t" style="left:1098px;top:666px;font-size:9px;font-weight:bold;letter-spacing:0.6px;color:#8a8f94">-oo</div>
<div class="a" style="left:1055px;top:677px;width:73px;height:27px;background:#0b0d0f;border:1px solid #666e76;border-radius:6px"></div>
<div class="a" style="left:1058px;top:679px;width:32px;height:10px;background:linear-gradient(#7b8999,#56636f);border-radius:2px"></div>
<div class="a" style="left:1058px;top:691px;width:32px;height:10px;background:linear-gradient(#7b8999,#56636f);border-radius:2px"></div>
<div class="a" style="left:1092px;top:679px;width:33px;height:10px;background:linear-gradient(#7b8999,#56636f);border-radius:2px"></div>
<div class="a" style="left:1092px;top:691px;width:33px;height:10px;background:linear-gradient(#7b8999,#56636f);border-radius:2px"></div>
<div class="t" style="left:1070px;top:680px;font-size:10px;font-weight:bold;color:#111">R</div>
<div class="t" style="left:1104px;top:680px;font-size:10px;font-weight:bold;color:#111">W</div>
<div class="a" style="left:1055px;top:710px;width:73px;height:19px;background:#25292d"></div>
<div class="a" style="left:1055px;top:729px;width:73px;height:25px;background:#a2a4a6"></div>
<div class="a" style="left:1128px;top:710px;width:1px;height:44px;background:#50565c"></div>
<svg class="a" style="left:1057px;top:713px" width="20" height="13"><circle cx="6.7" cy="6.6" r="4.8" fill="none" stroke="#bdbdbd" stroke-width="1.7"/><circle cx="13.4" cy="6.6" r="4.8" fill="none" stroke="#bdbdbd" stroke-width="1.7"/></svg>
<div class="t" style="left:1119px;top:715px;font-size:10.5px;font-weight:bold;color:#aaa">1</div>
<div class="t" style="left:1059px;top:736px;font-size:11.5px;color:#111">Stereo Out</div>
<div class="a" style="left:1130px;top:481px;width:70px;height:17px;background:#17191b;border-radius:3px"></div>
<div class="a" style="left:1129px;top:502px;width:73px;height:26px;background:#0b0d0f;border:1px solid #666e76;border-radius:6px"></div>
<div class="a" style="left:1132px;top:505px;width:32px;height:9px;background:linear-gradient(#7b8999,#56636f);border-radius:2px"></div>
<div class="a" style="left:1132px;top:516px;width:32px;height:9px;background:linear-gradient(#7b8999,#56636f);border-radius:2px"></div>
<div class="a" style="left:1166px;top:505px;width:33px;height:9px;background:linear-gradient(#7b8999,#56636f);border-radius:2px"></div>
<div class="a" style="left:1166px;top:516px;width:33px;height:9px;background:linear-gradient(#7b8999,#56636f);border-radius:2px"></div>
<div class="a" style="left:1138px;top:536px;width:2px;height:120px;background:#121416"></div>
<div class="a" style="left:1143px;top:542px;width:19px;height:1px;background:#6a727a"></div>
<div class="a" style="left:1143px;top:565px;width:19px;height:1px;background:#8f979f"></div>
<div class="a" style="left:1143px;top:585px;width:19px;height:1px;background:#6a727a"></div>
<div class="a" style="left:1143px;top:600px;width:19px;height:1px;background:#6a727a"></div>
<div class="a" style="left:1143px;top:613px;width:19px;height:1px;background:#6a727a"></div>
<div class="a" style="left:1143px;top:622px;width:19px;height:1px;background:#6a727a"></div>
<div class="a" style="left:1143px;top:634px;width:19px;height:1px;background:#6a727a"></div>
<div class="a" style="left:1143px;top:640px;width:19px;height:1px;background:#6a727a"></div>
<div class="a" style="left:1143px;top:649px;width:19px;height:1px;background:#6a727a"></div>
<div class="a" style="left:1169px;top:536px;width:29px;height:121px;background:linear-gradient(#000 84%,#2c2c2e);border:1px solid #6a7077;border-radius:5px"></div>
<div class="a" style="left:1171px;top:538px;width:24px;height:7px;background:linear-gradient(#2a2c2e,#151617)"></div>
<div class="a" style="left:1171px;top:545px;width:24px;height:1px;background:#3f4347"></div>
<div class="a" style="left:1132px;top:634px;width:14px;height:29px;background:linear-gradient(#f07070,#e85c5c 18%,#d42a2a 19%,#d02828 46%,#d02828 48%,#6a1010 48%,#6a1010 52%,#f04848 52%,#f05a5a 84%,#d23c3c 85%,#e86262);border:1px solid #4a0808;border-radius:2px;box-shadow:1px 1px 2px rgba(0,0,0,.5)"></div>
<div class="a" style="left:1129px;top:663px;width:73px;height:13px;background:#262a2e"></div>
<div class="t" style="left:1134px;top:666px;font-size:9px;font-weight:bold;letter-spacing:0.6px;color:#f0f0f0">-oo</div>
<div class="t" style="left:1172px;top:666px;font-size:9px;font-weight:bold;letter-spacing:0.6px;color:#8a8f94">-oo</div>
<div class="a" style="left:1129px;top:677px;width:73px;height:27px;background:#0b0d0f;border:1px solid #666e76;border-radius:6px"></div>
<div class="a" style="left:1132px;top:679px;width:32px;height:10px;background:linear-gradient(#7b8999,#56636f);border-radius:2px"></div>
<div class="a" style="left:1132px;top:691px;width:32px;height:10px;background:linear-gradient(#7b8999,#56636f);border-radius:2px"></div>
<div class="a" style="left:1166px;top:679px;width:33px;height:10px;background:linear-gradient(#7b8999,#56636f);border-radius:2px"></div>
<div class="a" style="left:1166px;top:691px;width:33px;height:10px;background:linear-gradient(#7b8999,#56636f);border-radius:2px"></div>
<div class="t" style="left:1144px;top:680px;font-size:10px;font-weight:bold;color:#111">R</div>
<div class="t" style="left:1178px;top:680px;font-size:10px;font-weight:bold;color:#111">W</div>
<div class="a" style="left:1129px;top:710px;width:73px;height:19px;background:#25292d"></div>
<div class="a" style="left:1129px;top:729px;width:73px;height:25px;background:#a2a4a6"></div>
<div class="a" style="left:1202px;top:710px;width:1px;height:44px;background:#50565c"></div>
<svg class="a" style="left:1131px;top:713px" width="20" height="13"><circle cx="6.7" cy="6.6" r="4.8" fill="none" stroke="#bdbdbd" stroke-width="1.7"/><circle cx="13.4" cy="6.6" r="4.8" fill="none" stroke="#bdbdbd" stroke-width="1.7"/></svg>
<div class="t" style="left:1193px;top:715px;font-size:10.5px;font-weight:bold;color:#aaa">2</div>
<div class="t" style="left:1133px;top:731px;font-size:11.5px;color:#111;line-height:10px">Stereo Out<br>2</div>
<div class="a" style="left:1202px;top:530px;width:74px;height:178px;background:#4c545c"></div>
<div class="a" style="left:1204px;top:481px;width:70px;height:17px;background:#17191b;border-radius:3px"></div>
<div class="a" style="left:1203px;top:502px;width:73px;height:26px;background:#0b0d0f;border:1px solid #666e76;border-radius:6px"></div>
<div class="a" style="left:1206px;top:505px;width:32px;height:9px;background:linear-gradient(#7b8999,#56636f);border-radius:2px"></div>
<div class="a" style="left:1206px;top:516px;width:32px;height:9px;background:linear-gradient(#7b8999,#56636f);border-radius:2px"></div>
<div class="a" style="left:1240px;top:505px;width:33px;height:9px;background:linear-gradient(#7b8999,#56636f);border-radius:2px"></div>
<div class="a" style="left:1240px;top:516px;width:33px;height:9px;background:linear-gradient(#7b8999,#56636f);border-radius:2px"></div>
<div class="a" style="left:1212px;top:536px;width:2px;height:120px;background:#121416"></div>
<div class="a" style="left:1217px;top:542px;width:19px;height:1px;background:#6a727a"></div>
<div class="a" style="left:1217px;top:565px;width:19px;height:1px;background:#8f979f"></div>
<div class="a" style="left:1217px;top:585px;width:19px;height:1px;background:#6a727a"></div>
<div class="a" style="left:1217px;top:600px;width:19px;height:1px;background:#6a727a"></div>
<div class="a" style="left:1217px;top:613px;width:19px;height:1px;background:#6a727a"></div>
<div class="a" style="left:1217px;top:622px;width:19px;height:1px;background:#6a727a"></div>
<div class="a" style="left:1217px;top:634px;width:19px;height:1px;background:#6a727a"></div>
<div class="a" style="left:1217px;top:640px;width:19px;height:1px;background:#6a727a"></div>
<div class="a" style="left:1217px;top:649px;width:19px;height:1px;background:#6a727a"></div>
<div class="a" style="left:1243px;top:536px;width:29px;height:121px;background:linear-gradient(#000 84%,#2c2c2e);border:1px solid #6a7077;border-radius:5px"></div>
<div class="a" style="left:1245px;top:538px;width:24px;height:7px;background:linear-gradient(#2a2c2e,#151617)"></div>
<div class="a" style="left:1245px;top:545px;width:24px;height:1px;background:#3f4347"></div>
<div class="a" style="left:1206px;top:616px;width:14px;height:29px;background:linear-gradient(#f07070,#e85c5c 18%,#d42a2a 19%,#d02828 46%,#d02828 48%,#6a1010 48%,#6a1010 52%,#f04848 52%,#f05a5a 84%,#d23c3c 85%,#e86262);border:1px solid #4a0808;border-radius:2px;box-shadow:1px 1px 2px rgba(0,0,0,.5)"></div>
<div class="a" style="left:1203px;top:663px;width:73px;height:13px;background:#343a40"></div>
<div class="t" style="left:1208px;top:666px;font-size:9px;font-weight:bold;letter-spacing:0.6px;color:#f0f0f0">-27.1</div>
<div class="t" style="left:1246px;top:666px;font-size:9px;font-weight:bold;letter-spacing:0.6px;color:#8a8f94">-oo</div>
<div class="a" style="left:1203px;top:677px;width:73px;height:27px;background:#0b0d0f;border:1px solid #666e76;border-radius:6px"></div>
<div class="a" style="left:1206px;top:679px;width:32px;height:10px;background:linear-gradient(#7b8999,#56636f);border-radius:2px"></div>
<div class="a" style="left:1206px;top:691px;width:32px;height:10px;background:linear-gradient(#7b8999,#56636f);border-radius:2px"></div>
<div class="a" style="left:1240px;top:679px;width:33px;height:10px;background:linear-gradient(#7b8999,#56636f);border-radius:2px"></div>
<div class="a" style="left:1240px;top:691px;width:33px;height:10px;background:linear-gradient(#7b8999,#56636f);border-radius:2px"></div>
<div class="t" style="left:1218px;top:680px;font-size:10px;font-weight:bold;color:#111">R</div>
<div class="t" style="left:1252px;top:680px;font-size:10px;font-weight:bold;color:#111">W</div>
<div class="a" style="left:1203px;top:710px;width:73px;height:19px;background:#25292d"></div>
<div class="a" style="left:1203px;top:729px;width:73px;height:25px;background:#a2a4a6"></div>
<div class="a" style="left:1276px;top:710px;width:1px;height:44px;background:#50565c"></div>
<svg class="a" style="left:1209px;top:713px" width="14" height="13"><circle cx="6.5" cy="6.5" r="4.8" fill="none" stroke="#bdbdbd" stroke-width="1.7"/></svg>
<div class="t" style="left:1267px;top:715px;font-size:10.5px;font-weight:bold;color:#aaa">3</div>
<div class="t" style="left:1207px;top:736px;font-size:11.5px;color:#111">Mono Out</div>
<div class="a" style="left:1278px;top:481px;width:70px;height:17px;background:#17191b;border-radius:3px"></div>
<div class="a" style="left:1277px;top:502px;width:73px;height:26px;background:#0b0d0f;border:1px solid #666e76;border-radius:6px"></div>
<div class="a" style="left:1280px;top:505px;width:32px;height:9px;background:linear-gradient(#7b8999,#56636f);border-radius:2px"></div>
<div class="a" style="left:1280px;top:516px;width:32px;height:9px;background:linear-gradient(#7b8999,#56636f);border-radius:2px"></div>
<div class="a" style="left:1314px;top:505px;width:33px;height:9px;background:linear-gradient(#7b8999,#56636f);border-radius:2px"></div>
<div class="a" style="left:1314px;top:516px;width:33px;height:9px;background:linear-gradient(#7b8999,#56636f);border-radius:2px"></div>
<div class="a" style="left:1286px;top:536px;width:2px;height:120px;background:#121416"></div>
<div class="a" style="left:1291px;top:542px;width:19px;height:1px;background:#6a727a"></div>
<div class="a" style="left:1291px;top:565px;width:19px;height:1px;background:#8f979f"></div>
<div class="a" style="left:1291px;top:585px;width:19px;height:1px;background:#6a727a"></div>
<div class="a" style="left:1291px;top:600px;width:19px;height:1px;background:#6a727a"></div>
<div class="a" style="left:1291px;top:613px;width:19px;height:1px;background:#6a727a"></div>
<div class="a" style="left:1291px;top:622px;width:19px;height:1px;background:#6a727a"></div>
<div class="a" style="left:1291px;top:634px;width:19px;height:1px;background:#6a727a"></div>
<div class="a" style="left:1291px;top:640px;width:19px;height:1px;background:#6a727a"></div>
<div class="a" style="left:1291px;top:649px;width:19px;height:1px;background:#6a727a"></div>
<div class="a" style="left:1317px;top:536px;width:29px;height:121px;background:linear-gradient(#000 84%,#2c2c2e);border:1px solid #6a7077;border-radius:5px"></div>
<div class="a" style="left:1319px;top:538px;width:24px;height:7px;background:linear-gradient(#2a2c2e,#151617)"></div>
<div class="a" style="left:1319px;top:545px;width:24px;height:1px;background:#3f4347"></div>
<div class="a" style="left:1280px;top:634px;width:14px;height:29px;background:linear-gradient(#f07070,#e85c5c 18%,#d42a2a 19%,#d02828 46%,#d02828 48%,#6a1010 48%,#6a1010 52%,#f04848 52%,#f05a5a 84%,#d23c3c 85%,#e86262);border:1px solid #4a0808;border-radius:2px;box-shadow:1px 1px 2px rgba(0,0,0,.5)"></div>
<div class="a" style="left:1277px;top:663px;width:73px;height:13px;background:#262a2e"></div>
<div class="t" style="left:1282px;top:666px;font-size:9px;font-weight:bold;letter-spacing:0.6px;color:#f0f0f0">-oo</div>
<div class="t" style="left:1320px;top:666px;font-size:9px;font-weight:bold;letter-spacing:0.6px;color:#8a8f94">-oo</div>
<div class="a" style="left:1277px;top:677px;width:73px;height:27px;background:#0b0d0f;border:1px solid #666e76;border-radius:6px"></div>
<div class="a" style="left:1280px;top:679px;width:32px;height:10px;background:linear-gradient(#7b8999,#56636f);border-radius:2px"></div>
<div class="a" style="left:1280px;top:691px;width:32px;height:10px;background:linear-gradient(#7b8999,#56636f);border-radius:2px"></div>
<div class="a" style="left:1314px;top:679px;width:33px;height:10px;background:linear-gradient(#7b8999,#56636f);border-radius:2px"></div>
<div class="a" style="left:1314px;top:691px;width:33px;height:10px;background:linear-gradient(#7b8999,#56636f);border-radius:2px"></div>
<div class="t" style="left:1292px;top:680px;font-size:10px;font-weight:bold;color:#111">R</div>
<div class="t" style="left:1326px;top:680px;font-size:10px;font-weight:bold;color:#111">W</div>
<div class="a" style="left:1277px;top:710px;width:73px;height:19px;background:#25292d"></div>
<div class="a" style="left:1277px;top:729px;width:73px;height:25px;background:#a2a4a6"></div>
<div class="a" style="left:1350px;top:710px;width:1px;height:44px;background:#50565c"></div>
<svg class="a" style="left:1283px;top:713px" width="14" height="13"><circle cx="6.5" cy="6.5" r="4.8" fill="none" stroke="#bdbdbd" stroke-width="1.7"/></svg>
<div class="t" style="left:1341px;top:715px;font-size:10.5px;font-weight:bold;color:#aaa">4</div>
<div class="t" style="left:1281px;top:731px;font-size:11.5px;color:#111;line-height:10px">Mono Out<br>2</div>
<div class="a" style="left:505px;top:158px;width:836px;height:439px;background:#21c055;border:1px solid #169040;border-top-color:#1a8a40"></div>
<div class="t" style="left:835px;top:167px;font-size:14.5px;color:#0e3a1b">VST Connections - Outputs</div>
<div class="a" style="left:1313px;top:164px;width:19px;height:19px;background:#d44a4c;border:1px solid #b03436"></div>
<svg class="a" style="left:1319px;top:170px" width="8" height="8"><path d="M1.5 1.5L6.5 6.5M6.5 1.5L1.5 6.5" stroke="#fff" stroke-width="1.5"/></svg>
<div class="a" style="left:512px;top:188px;width:822px;height:402px;background:#a3a5a8;border-left:1px solid #c8cacc;border-top:1px solid #1a9a48"></div>
<div class="a" style="left:513px;top:213px;width:820px;height:1px;background:#c4c6c8"></div>
<div class="a" style="left:519px;top:193px;width:64px;height:21px;background:#a6a8aa;border:1px solid #d8dadc;border-bottom:none;border-right-color:#6a6c6e;border-radius:3px 3px 0 0"></div>
<div class="a" style="left:584px;top:193px;width:62px;height:21px;background:#b4b6b8;border:1px solid #dcdee0;border-bottom:none;border-right:2px solid #6a6c6e;border-radius:3px 3px 0 0"></div>
<div class="t" style="left:534px;top:198px;font-size:12px;color:#1a1a1a">Inputs</div>
<div class="t" style="left:592px;top:198px;font-size:12px;font-weight:bold;color:#111">Outputs</div>
<svg class="a" style="left:528px;top:225px" width="24" height="11"><rect x="0.5" y="0.5" width="9" height="9" fill="none" stroke="#111"/><path d="M2.5 5H7.5M5 2.5V7.5" stroke="#111"/><rect x="12.5" y="0.5" width="9" height="9" fill="none" stroke="#111"/><path d="M14.5 5H19.5" stroke="#111"/></svg>
<div class="t" style="left:554px;top:226px;font-size:12px;color:#111">All</div>
<div class="a" style="left:592px;top:223px;width:120px;height:17px;background:linear-gradient(#eaeaea,#d6d6d6);border:1px solid #f2f2f2;border-bottom:2px solid #6e6e6e;border-right:2px solid #7a7a7a"></div>
<div class="t" style="left:630px;top:226px;font-size:12px;color:#111">Add Bus</div>
<div class="t" style="left:750px;top:226px;font-size:12px;color:#111;transform:scaleX(0.88);transform-origin:0 0">Presets</div>
<div class="a" style="left:790px;top:223px;width:79px;height:16px;background:#000;border:1px solid #606060;border-right:1px solid #d0d0d0;border-bottom:1px solid #d0d0d0"></div>
<div class="t" style="left:798px;top:226px;font-size:10px;color:#fff">-</div>
<div class="a" style="left:856px;top:225px;width:12px;height:13px;background:linear-gradient(#f4f4f4,#c4c4c4)"></div>
<svg class="a" style="left:858px;top:231px" width="8" height="4"><path d="M0 0H8L4 4Z" fill="#111"/></svg>
<div class="a" style="left:876px;top:223px;width:18px;height:14px;background:linear-gradient(#e8e8ec,#b8b8bc);border:1px solid #505050;border-radius:2px"></div>
<svg class="a" style="left:878px;top:225px" width="14" height="10"><path d="M1 1H10L13 4V9H1Z" fill="none" stroke="#111" stroke-width="1.3"/><path d="M10 1V4H13" fill="none" stroke="#111" stroke-width="1"/><path d="M3.5 5.5H8.5M6 3V8" stroke="#111" stroke-width="1.4"/></svg>
<div class="a" style="left:897px;top:223px;width:18px;height:14px;background:linear-gradient(#e8e8ec,#b8b8bc);border:1px solid #505050;border-radius:2px"></div>
<svg class="a" style="left:899px;top:225px" width="14" height="10"><path d="M1 1H10L13 4V9H1Z" fill="none" stroke="#111" stroke-width="1.3"/><path d="M10 1V4H13" fill="none" stroke="#111" stroke-width="1"/><path d="M3.5 5.5H8.5" stroke="#111" stroke-width="1.4"/></svg>
<div class="a" style="left:519px;top:246px;width:808px;height:340px;background:#46484a;border:2px solid #4a4c4e"></div>
<div class="a" style="left:521px;top:248px;width:788px;height:16px;background:#a2a4a6"></div>
<div class="a" style="left:1309px;top:248px;width:16px;height:16px;background:#a2a4a6"></div>
<div class="a" style="left:521px;top:264px;width:788px;height:305px;background:#e4eaf2"></div>
<div class="a" style="left:1048px;top:281px;width:129px;height:15px;background:#b2f0fb"></div>
<div class="a" style="left:1048px;top:297px;width:129px;height:15px;background:#b2f0fb"></div>
<div class="a" style="left:1048px;top:329px;width:129px;height:15px;background:#b2f0fb"></div>
<div class="a" style="left:1048px;top:345px;width:129px;height:15px;background:#b2f0fb"></div>
<div class="a" style="left:1048px;top:377px;width:129px;height:15px;background:#b2f0fb"></div>
<div class="a" style="left:1048px;top:409px;width:129px;height:15px;background:#b2f0fb"></div>
<div class="a" style="left:521px;top:280px;width:788px;height:1px;background:#9c9ea0"></div>
<div class="a" style="left:521px;top:296px;width:788px;height:1px;background:#9c9ea0"></div>
<div class="a" style="left:521px;top:312px;width:788px;height:1px;background:#9c9ea0"></div>
<div class="a" style="left:521px;top:328px;width:788px;height:1px;background:#9c9ea0"></div>
<div class="a" style="left:521px;top:344px;width:788px;height:1px;background:#9c9ea0"></div>
<div class="a" style="left:521px;top:360px;width:788px;height:1px;background:#9c9ea0"></div>
<div class="a" style="left:521px;top:376px;width:788px;height:1px;background:#9c9ea0"></div>
<div class="a" style="left:521px;top:392px;width:788px;height:1px;background:#9c9ea0"></div>
<div class="a" style="left:521px;top:408px;width:788px;height:1px;background:#9c9ea0"></div>
<div class="a" style="left:521px;top:424px;width:788px;height:1px;background:#9c9ea0"></div>
<div class="a" style="left:630px;top:248px;width:1px;height:321px;background:#8c8e90"></div>
<div class="a" style="left:631px;top:248px;width:1px;height:16px;background:#c0c2c4"></div>
<div class="a" style="left:710px;top:248px;width:1px;height:321px;background:#8c8e90"></div>
<div class="a" style="left:711px;top:248px;width:1px;height:16px;background:#c0c2c4"></div>
<div class="a" style="left:1047px;top:248px;width:1px;height:321px;background:#8c8e90"></div>
<div class="a" style="left:1048px;top:248px;width:1px;height:16px;background:#c0c2c4"></div>
<div class="a" style="left:1177px;top:248px;width:1px;height:321px;background:#8c8e90"></div>
<div class="a" style="left:1178px;top:248px;width:1px;height:16px;background:#c0c2c4"></div>
<div class="a" style="left:1217px;top:248px;width:1px;height:321px;background:#8c8e90"></div>
<div class="a" style="left:1218px;top:248px;width:1px;height:16px;background:#c0c2c4"></div>
<div class="a" style="left:521px;top:263px;width:788px;height:1px;background:#707274"></div>
<div class="t" style="left:526px;top:251px;font-size:11px;color:#111">Bus Name</div>
<div class="t" style="left:636px;top:251px;font-size:11px;color:#111">Speakers</div>
<div class="t" style="left:715px;top:251px;font-size:11px;color:#111">Audio Device</div>
<div class="t" style="left:1052px;top:251px;font-size:11px;color:#111">Device Port</div>
<div class="t" style="left:1182px;top:251px;font-size:11px;color:#111">Click</div>
<div class="a" style="left:531px;top:270px;width:1px;height:126px;border-left:1px dotted #777"></div>
<div class="a" style="left:551px;top:280px;width:1px;height:24px;border-left:1px dotted #777"></div>
<div class="a" style="left:551px;top:328px;width:1px;height:24px;border-left:1px dotted #777"></div>
<div class="a" style="left:551px;top:376px;width:1px;height:8px;border-left:1px dotted #777"></div>
<div class="a" style="left:551px;top:408px;width:1px;height:8px;border-left:1px dotted #777"></div>
<div class="a" style="left:527px;top:268px;width:9px;height:9px;border:1px solid #666;background:#f4f4f4"></div>
<div class="a" style="left:529px;top:272px;width:5px;height:1.5px;background:#111"></div>
<div class="a" style="left:537px;top:272px;width:6px;height:1px;border-top:1px dotted #777"></div>
<svg class="a" style="left:543px;top:266px" width="16" height="14"><path d="M1.5 4.5H4.5L7.5 1.5V12.5L4.5 9.5H1.5Z" fill="#f06a40" stroke="#3a1a10" stroke-width="1"/><path d="M7.5 1V13" stroke="#111" stroke-width="1.6"/><path d="M9.5 4.5Q11.5 7 9.5 9.5" fill="none" stroke="#b0b4b8" stroke-width="1.3"/><path d="M10.5 2Q15.5 7 10.5 12" fill="none" stroke="#8a8e92" stroke-width="1.4"/></svg>
<div class="t" style="left:564px;top:268px;font-size:11.5px;color:#111">Stereo Out</div>
<div class="t" style="left:636px;top:268px;font-size:11px;color:#777">Stereo</div>
<div class="t" style="left:715px;top:268px;font-size:11px;color:#111">M-Audio M-Track Eight ASIO (64)</div>
<div class="t" style="left:1181px;top:268px;font-size:11.5px;color:#111">Click</div>
<div class="a" style="left:552px;top:288px;width:11px;height:1px;border-top:1px dotted #777"></div>
<div class="a" style="left:563px;top:289px;width:8px;height:1px;background:#666"></div>
<div class="a" style="left:570px;top:286px;width:7px;height:7px;border:2px solid #6c7074;border-radius:50%"></div>
<div class="t" style="left:584px;top:284px;font-size:11.5px;color:#111">Left</div>
<div class="t" style="left:1052px;top:284px;font-size:11.5px;color:#111">Out 1</div>
<div class="a" style="left:552px;top:304px;width:11px;height:1px;border-top:1px dotted #777"></div>
<div class="a" style="left:563px;top:305px;width:8px;height:1px;background:#666"></div>
<div class="a" style="left:570px;top:302px;width:7px;height:7px;border:2px solid #6c7074;border-radius:50%"></div>
<div class="t" style="left:584px;top:300px;font-size:11.5px;color:#111">Right</div>
<div class="t" style="left:1052px;top:300px;font-size:11.5px;color:#111">Out 2</div>
<div class="a" style="left:527px;top:316px;width:9px;height:9px;border:1px solid #666;background:#f4f4f4"></div>
<div class="a" style="left:529px;top:320px;width:5px;height:1.5px;background:#111"></div>
<div class="a" style="left:537px;top:320px;width:6px;height:1px;border-top:1px dotted #777"></div>
<div class="t" style="left:544px;top:316px;font-size:11.5px;color:#111">Stereo Out 2</div>
<div class="t" style="left:636px;top:316px;font-size:11px;color:#777">Stereo</div>
<div class="t" style="left:715px;top:316px;font-size:11px;color:#111">M-Audio M-Track Eight ASIO (64)</div>
<div class="a" style="left:552px;top:336px;width:11px;height:1px;border-top:1px dotted #777"></div>
<div class="a" style="left:563px;top:337px;width:8px;height:1px;background:#666"></div>
<div class="a" style="left:570px;top:334px;width:7px;height:7px;border:2px solid #6c7074;border-radius:50%"></div>
<div class="t" style="left:584px;top:332px;font-size:11.5px;color:#111">Left</div>
<div class="t" style="left:1052px;top:332px;font-size:11.5px;color:#111">Out 1</div>
<div class="a" style="left:552px;top:352px;width:11px;height:1px;border-top:1px dotted #777"></div>
<div class="a" style="left:563px;top:353px;width:8px;height:1px;background:#666"></div>
<div class="a" style="left:570px;top:350px;width:7px;height:7px;border:2px solid #6c7074;border-radius:50%"></div>
<div class="t" style="left:584px;top:348px;font-size:11.5px;color:#111">Right</div>
<div class="t" style="left:1052px;top:348px;font-size:11.5px;color:#111">Out 2</div>
<div class="a" style="left:527px;top:364px;width:9px;height:9px;border:1px solid #666;background:#f4f4f4"></div>
<div class="a" style="left:529px;top:368px;width:5px;height:1.5px;background:#111"></div>
<div class="a" style="left:537px;top:368px;width:6px;height:1px;border-top:1px dotted #777"></div>
<div class="a" style="left:541px;top:361px;width:60px;height:14px;background:#6a6c6e"></div>
<div class="t" style="left:544px;top:364px;font-size:11.5px;color:#f4f4f4">Mono Out</div>
<div class="t" style="left:636px;top:364px;font-size:11px;color:#777">Mono</div>
<div class="t" style="left:715px;top:364px;font-size:11px;color:#111">M-Audio M-Track Eight ASIO (64)</div>
<div class="a" style="left:552px;top:384px;width:11px;height:1px;border-top:1px dotted #777"></div>
<div class="a" style="left:563px;top:385px;width:8px;height:1px;background:#666"></div>
<div class="a" style="left:570px;top:382px;width:7px;height:7px;border:2px solid #6c7074;border-radius:50%"></div>
<div class="t" style="left:584px;top:380px;font-size:11.5px;color:#111">Mono</div>
<div class="t" style="left:1052px;top:380px;font-size:11.5px;color:#111">Out 5</div>
<div class="a" style="left:527px;top:396px;width:9px;height:9px;border:1px solid #666;background:#f4f4f4"></div>
<div class="a" style="left:529px;top:400px;width:5px;height:1.5px;background:#111"></div>
<div class="a" style="left:537px;top:400px;width:6px;height:1px;border-top:1px dotted #777"></div>
<div class="t" style="left:544px;top:396px;font-size:11.5px;color:#111">Mono Out 2</div>
<div class="t" style="left:636px;top:396px;font-size:11px;color:#777">Mono</div>
<div class="t" style="left:715px;top:396px;font-size:11px;color:#111">M-Audio M-Track Eight ASIO (64)</div>
<div class="a" style="left:552px;top:416px;width:11px;height:1px;border-top:1px dotted #777"></div>
<div class="a" style="left:563px;top:417px;width:8px;height:1px;background:#666"></div>
<div class="a" style="left:570px;top:414px;width:7px;height:7px;border:2px solid #6c7074;border-radius:50%"></div>
<div class="t" style="left:584px;top:412px;font-size:11.5px;color:#111">Mono</div>
<div class="t" style="left:1052px;top:412px;font-size:11.5px;color:#111">Out 6</div>
<div class="a" style="left:1309px;top:264px;width:16px;height:305px;background:linear-gradient(90deg,#8a8c8e,#b8babc 50%,#9a9c9e)"></div>
<div class="a" style="left:1310px;top:265px;width:15px;height:15px;background:#bcbec0;border:1px solid #6a6c6e"></div>
<svg class="a" style="left:1312px;top:269px" width="11" height="7"><path d="M1 6L5.5 1.5L10 6" fill="none" stroke="#111" stroke-width="1.5"/></svg>
<div class="a" style="left:1310px;top:553px;width:15px;height:15px;background:#bcbec0;border:1px solid #6a6c6e"></div>
<svg class="a" style="left:1312px;top:558px" width="11" height="7"><path d="M1 1L5.5 5.5L10 1" fill="none" stroke="#111" stroke-width="1.5"/></svg>
<div class="a" style="left:521px;top:569px;width:788px;height:15px;background:linear-gradient(#8a8c8e,#b0b2b4 60%,#a8aaac);border-top:1px solid #505254"></div>
<div class="a" style="left:521px;top:570px;width:15px;height:15px;background:#bcbec0;border-right:1px solid #6a6c6e"></div>
<svg class="a" style="left:525px;top:572px" width="7" height="11"><path d="M6 1L1.5 5.5L6 10" fill="none" stroke="#111" stroke-width="1.5"/></svg>
<div class="a" style="left:1293px;top:570px;width:15px;height:15px;background:#bcbec0;border-left:1px solid #6a6c6e"></div>
<svg class="a" style="left:1297px;top:572px" width="7" height="11"><path d="M1 1L5.5 5.5L1 10" fill="none" stroke="#111" stroke-width="1.5"/></svg>
<div class="a" style="left:1309px;top:569px;width:16px;height:16px;background:#a4a6a8"></div>
<div class="a" style="left:0;top:766px;width:1366px;height:2px;background:#2a9a4c"></div>
<div class="a" style="left:80px;top:766px;width:59px;height:2px;background:#7fd49a"></div>
<div class="a" style="left:266px;top:766px;width:60px;height:2px;background:#7fd49a"></div>
<div class="a" style="left:328px;top:766px;width:60px;height:2px;background:#7fd49a"></div>
<div class="a" style="left:390px;top:766px;width:55px;height:2px;background:#7fd49a"></div>
</body></html>
